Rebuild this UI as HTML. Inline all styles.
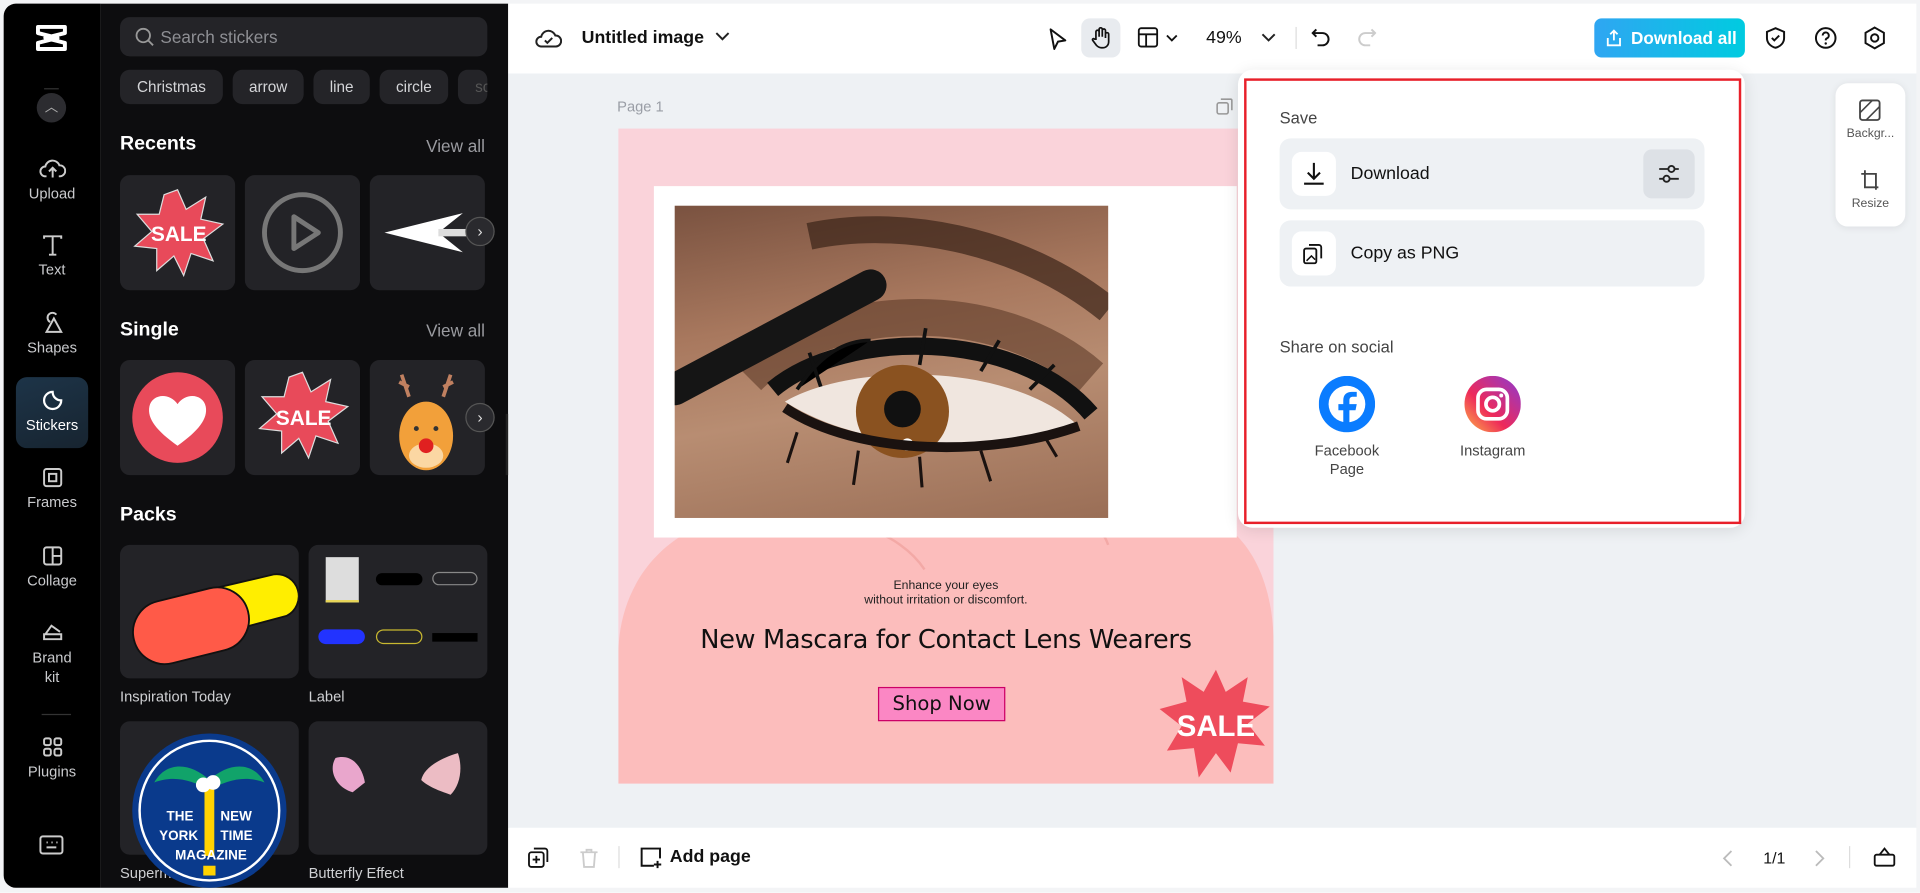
<!DOCTYPE html>
<html><head><meta charset="utf-8"><style>
*{box-sizing:border-box;margin:0;padding:0}
html,body{width:1920px;height:893px;overflow:hidden;background:#fff;font-family:"Liberation Sans",sans-serif}
#w{position:absolute;left:0;top:0;width:1568px;height:729px;transform:scale(1.2245);transform-origin:0 0;background:#f3f4f6}
.a{position:absolute}
.rail{left:3px;top:3px;width:79px;height:722px;background:#000;border-radius:10px 0 0 10px}
.panel{left:82px;top:3px;width:333px;height:722px;background:#0d0d0f}
.ri{position:absolute;width:79px;text-align:center;color:#c9cacd;font-size:12px}
.ri svg{display:block;margin:0 auto 3px}
.chip{position:absolute;top:57px;height:28px;border-radius:8px;background:#242428;color:#d4d5d8;font-size:12.5px;line-height:28px;text-align:center}
.h{position:absolute;color:#fff;font-weight:bold;font-size:16px}
.va{position:absolute;right:17px;color:#9a9ba0;font-size:14px}
.tile{position:absolute;background:#232327;border-radius:8px;overflow:hidden}
.lbl{position:absolute;color:#cfd0d3;font-size:12px}
.nx{position:absolute;width:24px;height:24px;border-radius:50%;background:#2a2a2e;border:1px solid #555;color:#ddd;font-size:13px;text-align:center;line-height:21px}
.top{left:415px;top:3px;width:1150px;height:57px;background:#fff}
.bot{left:415px;top:676px;width:1150px;height:49px;background:#fff}
.cv{left:415px;top:60px;width:1150px;height:616px;background:#eef1f4}
.row{position:absolute;left:1045px;width:347px;background:#eef1f4;border-radius:9px}
.ib{position:absolute;left:10px;width:36px;height:36px;background:#fff;border-radius:8px}
</style></head><body><div id="w">
<div class="a rail"></div>
<svg class="a" style="left:28px;top:19px" width="28" height="24" viewBox="0 0 28 24"><path d="M3 3h22v5L9 12l16 4v5H3v-5l16-4L3 8z" fill="none" stroke="#fff" stroke-width="3.2" stroke-linejoin="round"/></svg>
<div class="a" style="left:36px;top:72px;width:12px;height:1px;background:#333"></div>
<div class="a" style="left:30px;top:76px;width:24px;height:24px;border-radius:50%;background:#2c2c30;color:#aaa;font-size:11px;text-align:center;line-height:24px">︿</div>
<div class="ri" style="left:3px;top:128px"><svg width="22" height="20" viewBox="0 0 22 20"><path d="M6 16H5a4 4 0 0 1 0-8 6 6 0 0 1 11.5-1A4.5 4.5 0 0 1 17 16h-1M11 17V9m-3 3 3-3 3 3" fill="none" stroke="#ccc" stroke-width="1.6"/></svg>Upload</div>
<div class="ri" style="left:3px;top:190px"><svg width="20" height="20" viewBox="0 0 20 20"><path d="M3 5V3h14v2M10 3v15M7 18h6" fill="none" stroke="#ccc" stroke-width="1.6"/></svg>Text</div>
<div class="ri" style="left:3px;top:254px"><svg width="20" height="20" viewBox="0 0 20 20"><path d="M8 9a4 4 0 1 1 5-6M11 6l6 11H5z" fill="none" stroke="#ccc" stroke-width="1.6"/></svg>Shapes</div>
<div class="a" style="left:13px;top:308px;width:59px;height:58px;border-radius:9px;background:linear-gradient(160deg,#1d3448,#172430)"></div>
<div class="ri" style="left:3px;top:317px;color:#fff"><svg width="20" height="20" viewBox="0 0 20 20"><path d="M10 3a7 7 0 1 0 7 7c-4 0-7-3-7-7z" fill="none" stroke="#fff" stroke-width="1.8"/></svg>Stickers</div>
<div class="ri" style="left:3px;top:380px"><svg width="20" height="20" viewBox="0 0 20 20"><rect x="3" y="3" width="14" height="14" rx="2" fill="none" stroke="#ccc" stroke-width="1.6"/><rect x="7" y="7" width="6" height="6" fill="none" stroke="#ccc" stroke-width="1.6"/></svg>Frames</div>
<div class="ri" style="left:3px;top:444px"><svg width="20" height="20" viewBox="0 0 20 20"><rect x="3" y="3" width="14" height="14" rx="2" fill="none" stroke="#ccc" stroke-width="1.6"/><path d="M10 3v14M10 10h7" stroke="#ccc" stroke-width="1.6"/></svg>Collage</div>
<div class="ri" style="left:3px;top:506px;line-height:16px"><svg width="20" height="20" viewBox="0 0 20 20"><path d="M3 12h14v4H3zM4 12l5-7 7 5" fill="none" stroke="#ccc" stroke-width="1.6"/></svg>Brand<br>kit</div>
<div class="a" style="left:34px;top:583px;width:24px;height:1px;background:#333"></div>
<div class="ri" style="left:3px;top:600px"><svg width="20" height="20" viewBox="0 0 20 20"><g fill="none" stroke="#ccc" stroke-width="1.6"><rect x="3" y="3" width="5.5" height="5.5" rx="1.5"/><rect x="11.5" y="3" width="5.5" height="5.5" rx="1.5"/><rect x="3" y="11.5" width="5.5" height="5.5" rx="1.5"/><rect x="11.5" y="11.5" width="5.5" height="5.5" rx="1.5"/></g></svg>Plugins</div>
<svg class="a" style="left:32px;top:682px" width="20" height="16" viewBox="0 0 20 16"><rect x="1" y="1" width="18" height="14" rx="2" fill="none" stroke="#ccc" stroke-width="1.6"/><path d="M6 10h8M6 6h1M10 6h1M14 6h1" stroke="#ccc" stroke-width="1.6"/></svg>

<div class="a panel"></div>
<div class="a" style="left:98px;top:14px;width:300px;height:32px;border-radius:8px;background:#242428;color:#8e8f94;font-size:14px;line-height:32px;padding-left:33px">Search stickers</div>
<svg class="a" style="left:110px;top:22px" width="16" height="16" viewBox="0 0 16 16"><circle cx="7" cy="7" r="5.5" fill="none" stroke="#999" stroke-width="1.5"/><path d="M11 11l4 4" stroke="#999" stroke-width="1.5"/></svg>
<div class="chip" style="left:98px;width:84px">Christmas</div>
<div class="chip" style="left:190px;width:58px">arrow</div>
<div class="chip" style="left:256px;width:46px">line</div>
<div class="chip" style="left:310px;width:56px">circle</div>
<div class="chip" style="left:374px;width:24px;color:#555;text-align:left;padding-left:14px;overflow:hidden">sc</div>
<div class="h" style="left:98px;top:109px">Recents</div><div class="va" style="left:348px;top:111px">View all</div>
<div class="tile" style="left:98px;top:143px;width:94px;height:94px"><svg width="94" height="94" viewBox="0 0 94 94"><polygon points="47,12 54,28 70,18 66,36 84,40 68,52 76,70 58,64 52,82 44,66 30,78 30,60 12,58 26,46 14,32 32,32 36,16" fill="#e84a5a" stroke="#ddd" stroke-width="1"/><text x="48" y="54" fill="#fff" font-weight="bold" font-size="17" text-anchor="middle" font-family="Liberation Sans">SALE</text></svg></div>
<div class="tile" style="left:200px;top:143px;width:94px;height:94px"><svg width="94" height="94"><circle cx="47" cy="47" r="31" fill="none" stroke="#777" stroke-width="4"/><path d="M40 34v26l20-13z" fill="none" stroke="#777" stroke-width="4" stroke-linejoin="round"/></svg></div>
<div class="tile" style="left:302px;top:143px;width:94px;height:94px"><svg width="94" height="94"><path d="M12 47l64-16-20 16 20 16z" fill="#fff"/><rect x="56" y="44" width="30" height="6" fill="#ddd"/></svg></div>
<div class="nx" style="left:380px;top:177px">›</div>
<div class="h" style="left:98px;top:261px">Single</div><div class="va" style="left:348px;top:262px">View all</div>
<div class="tile" style="left:98px;top:294px;width:94px;height:94px"><svg width="94" height="94"><circle cx="47" cy="47" r="37" fill="#e84a5a"/><path d="M47 70C30 58 22 48 24 38c2-10 16-12 23-2 7-10 21-8 23 2 2 10-6 20-23 32z" fill="#fff"/></svg></div>
<div class="tile" style="left:200px;top:294px;width:94px;height:94px"><svg width="94" height="94" viewBox="0 0 94 94"><polygon points="47,10 54,26 70,16 66,34 84,38 68,50 76,68 58,62 52,80 44,64 30,76 30,58 12,56 26,44 14,30 32,30 36,14" fill="#e84a5a" stroke="#ddd" stroke-width="1"/><text x="48" y="53" fill="#fff" font-weight="bold" font-size="17" text-anchor="middle" font-family="Liberation Sans">SALE</text></svg></div>
<div class="tile" style="left:302px;top:294px;width:94px;height:94px"><svg width="94" height="94"><path d="M32 30l-6-18M32 22l-8-4M60 30l6-18M60 22l8-4" stroke="#c08060" stroke-width="3"/><ellipse cx="46" cy="62" rx="22" ry="28" fill="#f2a03a"/><ellipse cx="46" cy="78" rx="14" ry="10" fill="#fbd7a3"/><circle cx="46" cy="70" r="6" fill="#e02020"/><circle cx="38" cy="56" r="2" fill="#333"/><circle cx="54" cy="56" r="2" fill="#333"/></svg></div>
<div class="nx" style="left:380px;top:329px">›</div>
<div class="h" style="left:98px;top:412px">Packs</div>
<div class="tile" style="left:98px;top:445px;width:146px;height:109px"><svg width="146" height="109"><path d="M66 38l60-14a18 18 0 0 1 10 34l-60 16z" fill="#ffee00" stroke="#111" stroke-width="1.5"/><rect x="10" y="40" width="96" height="52" rx="26" transform="rotate(-14 58 66)" fill="#ff5a48" stroke="#111" stroke-width="1.5"/></svg></div>
<div class="tile" style="left:252px;top:445px;width:146px;height:109px"><div class="a" style="left:14px;top:10px;width:27px;height:37px;background:#ddd;border-bottom:2px solid #e8d65a"></div><div class="a" style="left:55px;top:23px;width:38px;height:10px;border-radius:5px;background:#000"></div><div class="a" style="left:101px;top:22px;width:37px;height:11px;border-radius:6px;border:1px solid #888"></div><div class="a" style="left:8px;top:69px;width:38px;height:12px;border-radius:6px;background:#2233ff"></div><div class="a" style="left:55px;top:69px;width:38px;height:12px;border-radius:6px;border:1px solid #c8b830"></div><div class="a" style="left:101px;top:72px;width:37px;height:7px;background:#000"></div></div>
<div class="lbl" style="left:98px;top:562px">Inspiration Today</div><div class="lbl" style="left:252px;top:562px">Label</div>
<div class="tile" style="left:98px;top:589px;width:146px;height:109px"></div>
<div class="tile" style="left:252px;top:589px;width:146px;height:109px"><svg width="146" height="109"><path d="M22 30c-6 10 0 24 14 28l10-8c-2-12-10-24-24-20z" fill="#e9a6cc"/><path d="M122 26c-14 4-28 12-30 22 6 6 18 10 24 12 8-8 10-22 6-34z" fill="#ecbcc4"/></svg></div>
<div class="lbl" style="left:98px;top:706px">Supermarket</div><div class="lbl" style="left:252px;top:706px">Butterfly Effect</div>
<svg class="a" style="left:106px;top:597px" width="130" height="130" viewBox="0 0 130 130"><circle cx="65" cy="65" r="63" fill="#0a3a8c"/><circle cx="65" cy="65" r="57" fill="none" stroke="#fff" stroke-width="2"/><path d="M20 42c10-18 30-16 45-2 15-14 35-16 45 2-16-6-30-2-45 6-15-8-29-12-45-6z" fill="#11a36a"/><rect x="61" y="44" width="8" height="58" fill="#ffd200"/><circle cx="60" cy="44" r="6" fill="#fff"/><circle cx="68" cy="42" r="6" fill="#fff"/><rect x="60" y="110" width="10" height="8" fill="#ffd200"/><g fill="#fff" font-weight="bold" font-size="11" font-family="Liberation Sans"><text x="30" y="73">THE</text><text x="74" y="73">NEW</text><text x="24" y="89">YORK</text><text x="74" y="89">TIME</text><text x="37" y="105">MAGAZINE</text></g></svg>
<div class="a" style="left:413px;top:338px;width:8px;height:50px;border-radius:0 6px 6px 0;background:#222"></div>

<div class="a top"></div>
<svg class="a" style="left:437px;top:22px" width="22" height="18" viewBox="0 0 22 18"><path d="M6 16H5a4 4 0 0 1 0-8 6 6 0 0 1 11.5-1A4.5 4.5 0 0 1 17 16zM8 11l2 2 4-4" fill="none" stroke="#222" stroke-width="1.6"/></svg>
<div class="a" style="left:475px;top:23px;font-size:14.5px;font-weight:bold;color:#111">Untitled image</div>
<svg class="a" style="left:584px;top:26px" width="12" height="8"><path d="M1 1l5 5 5-5" fill="none" stroke="#222" stroke-width="1.6"/></svg>
<svg class="a" style="left:855px;top:22px" width="18" height="20"><path d="M3 2l12 9-6 1-3 6z" fill="none" stroke="#111" stroke-width="1.6" stroke-linejoin="round"/></svg>
<div class="a" style="left:883px;top:15px;width:32px;height:32px;border-radius:7px;background:#e8ebef"></div>
<svg class="a" style="left:889px;top:21px" width="20" height="20" viewBox="0 0 20 20"><path d="M6 11V5a1.3 1.3 0 0 1 2.6 0v4V3a1.3 1.3 0 0 1 2.6 0v6V4a1.3 1.3 0 0 1 2.6 0v6V7a1.3 1.3 0 0 1 2.6 0v6c0 3-2 5-5 5h-1c-2 0-3-1-4-2l-3-4c-.6-1 .6-2 1.6-1z" fill="none" stroke="#111" stroke-width="1.4"/></svg>
<svg class="a" style="left:929px;top:22px" width="36" height="18"><rect x="1" y="1" width="15" height="15" rx="2" fill="none" stroke="#111" stroke-width="1.5"/><path d="M1 6h15M7 6v10" stroke="#111" stroke-width="1.5"/><path d="M24 7l4 4 4-4" fill="none" stroke="#111" stroke-width="1.5"/></svg>
<div class="a" style="left:985px;top:23px;font-size:14.5px;color:#111">49%</div>
<svg class="a" style="left:1030px;top:27px" width="12" height="8"><path d="M1 1l5 5 5-5" fill="none" stroke="#222" stroke-width="1.6"/></svg>
<div class="a" style="left:1058px;top:22px;width:1px;height:18px;background:#ddd"></div>
<svg class="a" style="left:1071px;top:22px" width="16" height="18"><path d="M4 2L1 5l3 3M1 5h8a5 5 0 0 1 0 10H5" fill="none" stroke="#111" stroke-width="1.6"/></svg>
<svg class="a" style="left:1108px;top:22px" width="16" height="18"><path d="M12 2l3 3-3 3M15 5H7a5 5 0 0 0 0 10h4" fill="none" stroke="#ccc" stroke-width="1.6"/></svg>
<div class="a" style="left:1302px;top:15px;width:123px;height:32px;border-radius:6px;background:linear-gradient(90deg,#2fa6f2,#00cbe0);color:#fff;font-size:14px;font-weight:bold;line-height:32px;padding-left:30px">Download all</div>
<svg class="a" style="left:1311px;top:23px" width="14" height="16"><path d="M7 10V2M4 5l3-3 3 3M2 8v6h10V8" fill="none" stroke="#fff" stroke-width="1.5"/></svg>
<svg class="a" style="left:1441px;top:21px" width="18" height="20"><path d="M9 2l7 3v5c0 4-3 7-7 8-4-1-7-4-7-8V5z M6 10l2 2 4-4" fill="none" stroke="#111" stroke-width="1.6"/></svg>
<svg class="a" style="left:1481px;top:21px" width="20" height="20"><circle cx="10" cy="10" r="8" fill="none" stroke="#111" stroke-width="1.6"/><path d="M7.5 8a2.5 2.5 0 1 1 3.5 2.3c-.7.3-1 .8-1 1.5V12" fill="none" stroke="#111" stroke-width="1.6"/><circle cx="10" cy="14.5" r="1" fill="#111"/></svg>
<svg class="a" style="left:1521px;top:21px" width="20" height="20"><path d="M10 1.5l7.5 4.3v8.4L10 18.5l-7.5-4.3V5.8z" fill="none" stroke="#111" stroke-width="1.6"/><circle cx="10" cy="10" r="3" fill="none" stroke="#111" stroke-width="1.6"/></svg>

<div class="a cv"></div>
<div class="a" style="left:504px;top:80px;font-size:12px;color:#9a9ea6">Page 1</div>
<svg class="a" style="left:993px;top:80px" width="14" height="14"><rect x="1" y="4" width="9" height="9" rx="1.5" fill="none" stroke="#999" stroke-width="1.3"/><path d="M4 1h8a1 1 0 0 1 1 1v8" fill="none" stroke="#999" stroke-width="1.3"/></svg>
<div class="a" style="left:505px;top:105px;width:535px;height:535px;background:#fad3da;overflow:hidden">
  <svg width="535" height="535" style="position:absolute;left:0;top:0"><path d="M145 320c-30-120 80-180 150-40 80-120 170-60 150 40 40-20 90 20 90 100v115H0V430c0-80 70-130 145-110z" fill="#fbb9b6" opacity=".85"/><path d="M140 330c40-20 90 0 110 30M300 330c40-30 90-20 100 10" fill="none" stroke="#f3a9a6" stroke-width="2"/></svg>
  <div class="a" style="left:29px;top:47px;width:476px;height:287px;background:#fff"></div>
  <div class="a" style="left:46px;top:63px;width:354px;height:255px;background:linear-gradient(170deg,#7a5240 0%,#a8785e 35%,#b88d72 60%,#9a6e56 100%)"></div>
  <svg class="a" style="left:46px;top:63px" width="354" height="255"><path d="M110 25c70-15 170 0 244 60" fill="none" stroke="#3a2418" stroke-width="22" opacity=".7"/><path d="M60 140c60-60 200-70 280 0" fill="none" stroke="#5e3a28" stroke-width="30" opacity=".6"/><path d="M80 150c60-50 200-50 260 20" fill="none" stroke="#111" stroke-width="14"/><path d="M100 150c20-30 40-40 60-40M120 150l-10-30M200 130l5-30M250 135l15-25M290 150l20-20" stroke="#111" stroke-width="3"/><path d="M90 160c50-30 180-35 240 20c-60 20-170 25-240-20z" fill="#f0e6df"/><circle cx="186" cy="168" r="38" fill="#8a5220"/><circle cx="186" cy="166" r="15" fill="#111"/><circle cx="190" cy="195" r="5" fill="#fff"/><path d="M90 165c60 40 170 40 240 15" fill="none" stroke="#1a1210" stroke-width="8"/><path d="M100 185l-8 25M150 200l-4 28M200 205l2 25M250 200l8 25M300 185l12 20" stroke="#1a1210" stroke-width="2.5"/><path d="M0 150l160-85" stroke="#151515" stroke-width="26" stroke-linecap="round"/></svg>
  <div class="a" style="left:0;top:368px;width:535px;text-align:center;font-size:10px;line-height:12px;color:#222">Enhance your eyes<br>without irritation or discomfort.</div>
  <div class="a" style="left:0;top:405px;width:535px;text-align:center;font-size:21px;color:#111;font-family:'DejaVu Sans',sans-serif;letter-spacing:-.3px">New Mascara for Contact Lens Wearers</div>
  <div class="a" style="left:212px;top:456px;width:104px;height:28px;background:#fb87c4;border:1px solid #c06;color:#111;font-size:16px;text-align:center;line-height:26px;font-family:'DejaVu Sans',sans-serif">Shop Now</div>
  <svg class="a" style="left:438px;top:438px" width="100" height="100" viewBox="0 0 100 100"><polygon points="50,4 58,22 76,10 72,30 94,34 76,48 90,66 68,64 62,88 50,72 36,92 32,68 10,70 22,50 4,36 26,30 22,10 40,22" fill="#ee4c5c"/><text x="50" y="58" fill="#fff" font-weight="bold" font-size="24" text-anchor="middle" font-family="Liberation Sans">SALE</text></svg>
</div>

<div class="a" style="left:1499px;top:68px;width:57px;height:117px;background:#fff;border-radius:10px;box-shadow:0 1px 6px rgba(0,0,0,.08)"></div>
<svg class="a" style="left:1518px;top:81px" width="18" height="18"><rect x="1" y="1" width="16" height="16" rx="2" fill="none" stroke="#444" stroke-width="1.5"/><path d="M1 11L11 1M6 17L17 6" stroke="#444" stroke-width="1.3"/></svg>
<div class="a" style="left:1499px;top:104px;width:57px;text-align:center;font-size:10px;color:#555">Backgr...</div>
<svg class="a" style="left:1519px;top:138px" width="16" height="18"><path d="M4 1v14h11M1 4h12v13" fill="none" stroke="#444" stroke-width="1.5"/></svg>
<div class="a" style="left:1499px;top:161px;width:57px;text-align:center;font-size:10px;color:#555">Resize</div>

<div class="a" style="left:1011px;top:57px;width:414px;height:374px;background:#fff;border-radius:12px;box-shadow:0 2px 12px rgba(0,0,0,.1)"></div>
<div class="a" style="left:1016px;top:64px;width:406px;height:364px;border:2px solid #e8202a"></div>
<div class="a" style="left:1045px;top:89px;font-size:13.5px;color:#444">Save</div>
<div class="row" style="top:113px;height:58px"><div class="ib" style="top:11px"></div><div class="a" style="left:58px;top:21px;font-size:14.5px;color:#111">Download</div><div class="a" style="left:297px;top:9px;width:42px;height:40px;border-radius:7px;background:#dde1e6"></div></div>
<svg class="a" style="left:1063px;top:131px" width="20" height="22"><path d="M10 2v13M5 10l5 5 5-5M2 19h16" fill="none" stroke="#111" stroke-width="1.7"/></svg>
<svg class="a" style="left:1353px;top:132px" width="20" height="20"><path d="M2 6h16M2 14h16" stroke="#222" stroke-width="1.5"/><circle cx="12" cy="6" r="2.5" fill="#dde1e6" stroke="#222" stroke-width="1.5"/><circle cx="8" cy="14" r="2.5" fill="#dde1e6" stroke="#222" stroke-width="1.5"/></svg>
<div class="row" style="top:180px;height:54px"><div class="ib" style="top:9px"></div><div class="a" style="left:58px;top:19px;font-size:14.5px;color:#111">Copy as PNG</div></div>
<svg class="a" style="left:1064px;top:199px" width="16" height="17"><rect x="1" y="4" width="10" height="12" rx="1.5" fill="none" stroke="#111" stroke-width="1.5"/><path d="M5 1h8a2 2 0 0 1 2 2v9" fill="none" stroke="#111" stroke-width="1.5"/><path d="M3 14l4-4 3 3" fill="none" stroke="#111" stroke-width="1.2"/></svg>
<div class="a" style="left:1045px;top:276px;font-size:13.5px;color:#444">Share on social</div>
<svg class="a" style="left:1077px;top:307px" width="46" height="46"><circle cx="23" cy="23" r="23" fill="#0a7cff"/><circle cx="23" cy="23" r="15" fill="#fff"/><path d="M25 46V28h5l1-5h-6v-3c0-2 1-3 3-3h3v-4h-4c-4 0-7 2-7 7v3h-4v5h4v18z" fill="#0a7cff"/></svg>
<div class="a" style="left:1060px;top:361px;width:80px;text-align:center;font-size:12px;line-height:15px;color:#444">Facebook<br>Page</div>
<svg class="a" style="left:1196px;top:307px" width="46" height="46"><defs><linearGradient id="ig" x1="0" y1="1" x2="1" y2="0"><stop offset="0" stop-color="#fdb347"/><stop offset=".4" stop-color="#ee2a5a"/><stop offset="1" stop-color="#8c3ad2"/></linearGradient></defs><circle cx="23" cy="23" r="23" fill="url(#ig)"/><rect x="11" y="11" width="24" height="24" rx="7" fill="none" stroke="#fff" stroke-width="3"/><circle cx="23" cy="23" r="5.5" fill="none" stroke="#fff" stroke-width="3"/><circle cx="30" cy="16" r="1.6" fill="#fff"/></svg>
<div class="a" style="left:1179px;top:361px;width:80px;text-align:center;font-size:12px;color:#444">Instagram</div>

<div class="a bot"></div>
<svg class="a" style="left:431px;top:692px" width="17" height="17"><rect x="1" y="4" width="12" height="12" rx="2" fill="none" stroke="#111" stroke-width="1.5"/><path d="M5 1h9a2 2 0 0 1 2 2v9M7 7v6M4 10h6" fill="none" stroke="#111" stroke-width="1.5"/></svg>
<svg class="a" style="left:473px;top:692px" width="16" height="17"><path d="M1 4h14M6 4V2h4v2M3 4l1 12h8l1-12" fill="none" stroke="#ccc" stroke-width="1.5"/></svg>
<div class="a" style="left:505px;top:691px;width:1px;height:18px;background:#ddd"></div>
<svg class="a" style="left:522px;top:691px" width="20" height="19"><path d="M12 16H2V2h15v8M15 12v6M12 15h6" fill="none" stroke="#111" stroke-width="1.6"/></svg>
<div class="a" style="left:547px;top:692px;font-size:14.5px;font-weight:bold;color:#111">Add page</div>
<svg class="a" style="left:1406px;top:694px" width="10" height="14"><path d="M8 1L2 7l6 6" fill="none" stroke="#bbb" stroke-width="1.5"/></svg>
<div class="a" style="left:1440px;top:693px;font-size:13px;color:#111">1/1</div>
<svg class="a" style="left:1481px;top:694px" width="10" height="14"><path d="M2 1l6 6-6 6" fill="none" stroke="#bbb" stroke-width="1.5"/></svg>
<div class="a" style="left:1510px;top:691px;width:1px;height:18px;background:#ddd"></div>
<svg class="a" style="left:1530px;top:691px" width="18" height="17"><rect x="1" y="7" width="16" height="9" rx="1.5" fill="none" stroke="#111" stroke-width="1.5"/><path d="M5 7l4-5 4 5" fill="none" stroke="#111" stroke-width="1.5"/></svg>
</div></body></html>
